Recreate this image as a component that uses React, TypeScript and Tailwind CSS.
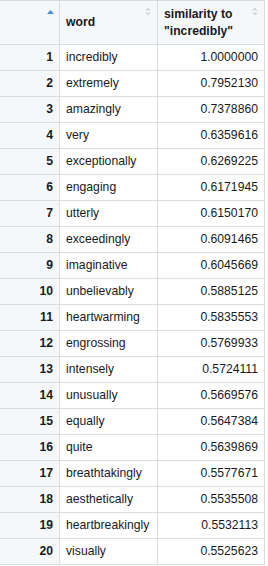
import React from 'react'

const rows: [string, string][] = [
  ['incredibly', '1.0000000'],
  ['extremely', '0.7952130'],
  ['amazingly', '0.7378860'],
  ['very', '0.6359616'],
  ['exceptionally', '0.6269225'],
  ['engaging', '0.6171945'],
  ['utterly', '0.6150170'],
  ['exceedingly', '0.6091465'],
  ['imaginative', '0.6045669'],
  ['unbelievably', '0.5885125'],
  ['heartwarming', '0.5835553'],
  ['engrossing', '0.5769933'],
  ['intensely', '0.5724111'],
  ['unusually', '0.5669576'],
  ['equally', '0.5647384'],
  ['quite', '0.5639869'],
  ['breathtakingly', '0.5577671'],
  ['aesthetically', '0.5535508'],
  ['heartbreakingly', '0.5532113'],
  ['visually', '0.5525623'],
]

function SortArrows() {
  return (
    <svg width="6" height="9" viewBox="0 0 6 9" className="absolute top-[6px] right-[6px]">
      <path d="M0 3.5 L3 0.5 L6 3.5 Z" fill="#d3d6d9" />
      <path d="M0 5.5 L3 8.5 L6 5.5 Z" fill="#d3d6d9" />
    </svg>
  )
}

export default function App() {
  return (
    <div className="bg-white w-[268px] h-[566px] text-[12.2px] text-[#1a1a1a]" style={{ fontFamily: '"Segoe UI", "Liberation Sans", Arial, sans-serif' }}>
      <div className="w-[265px] border-t border-[#dcdcdc]">
        <div className="grid grid-cols-[60px_98px_107px] h-[44px] bg-[#f5f8fa] border-b border-[#dcdcdc]">
          <div className="relative border-r border-[#dcdcdc]">
            <svg width="7" height="4" viewBox="0 0 7 4" className="absolute top-[9px] left-[47px]">
              <path d="M0 4 L3.5 0 L7 4 Z" fill="#4a90d9" />
            </svg>
          </div>
          <div className="relative flex items-center pl-[6px] border-r border-[#dcdcdc] font-bold">
            word
            <SortArrows />
          </div>
          <div className="relative flex items-center pl-[6px] border-r border-[#dcdcdc] font-bold leading-[17px]">
            <span>similarity to<br />"incredibly"</span>
            <SortArrows />
          </div>
        </div>
        {rows.map(([word, sim], i) => (
          <div key={word} className="grid grid-cols-[60px_98px_107px] h-[26px] border-b border-[#dcdcdc]">
            <div className="flex items-center justify-end pr-[6px] bg-[#f5f8fa] border-r border-[#dcdcdc] font-bold">
              {i + 1}
            </div>
            <div className="flex items-center pl-[6px] border-r border-[#dcdcdc]">{word}</div>
            <div className="flex items-center justify-end pr-[6px] border-r border-[#dcdcdc]">{sim}</div>
          </div>
        ))}
      </div>
    </div>
  )
}
